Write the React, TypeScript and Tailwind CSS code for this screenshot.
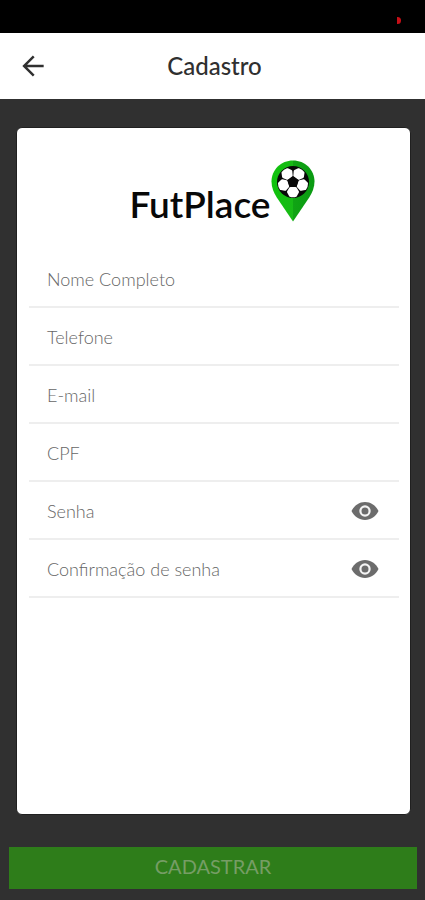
import { useState } from "react";

type Field = { id: string; label: string; type: string };

const fields: Field[] = [
  { id: "nome", label: "Nome Completo", type: "text" },
  { id: "telefone", label: "Telefone", type: "tel" },
  { id: "email", label: "E-mail", type: "email" },
  { id: "cpf", label: "CPF", type: "text" },
  { id: "senha", label: "Senha", type: "password" },
  { id: "confirmacao", label: "Confirmação de senha", type: "password" },
];

function BackArrow() {
  return (
    <svg viewBox="0 0 24 24" className="size-8" fill="#303030" aria-hidden="true">
      <path d="M20 11.100H7.600l5.600-5.700L11.900 4.100 4 12l7.900 7.900 1.300-1.300-5.600-5.700H20z" />
    </svg>
  );
}

function EyeIcon() {
  return (
    <svg viewBox="0 0 28 20" className="h-5 w-7" aria-hidden="true">
      <path d="M.5 10C3.200 4.500 8.100 1 14 1s10.800 3.500 13.500 9c-2.700 5.500-7.600 9-13.500 9S3.200 15.500.5 10z" fill="#6c6c6c" />
      <circle cx="14" cy="10" r="4.600" fill="#6c6c6c" stroke="#f4f4f4" strokeWidth="2.200" />
    </svg>
  );
}

const spokes = [0, 72, 144, 216, 288];

function PinLogo() {
  return (
    <svg viewBox="0 0 44 62" className="h-[62px] w-11" aria-hidden="true">
      <defs>
        <linearGradient id="pin" x1="0" x2="1" y1="0" y2="0">
          <stop offset="0" stopColor="#0fc30c" />
          <stop offset="0.500" stopColor="#18b916" />
          <stop offset="0.510" stopColor="#10a414" />
          <stop offset="1" stopColor="#0a9a12" />
        </linearGradient>
      </defs>
      <path d="M22 .5C10 .5.500 9.700.500 21.500c0 6 2.200 11 5.300 16L22 61.500l16.200-24c3.100-5 5.300-10 5.300-16C43.500 9.700 34 .5 22 .5z" fill="url(#pin)" />
      <circle cx="22" cy="22" r="16" fill="#080808" />
      {spokes.map((angle) => (
        <path
          key={angle}
          transform={`rotate(${angle} 22 22)`}
          d="M19.500 28.200h5l2.200 3.700-1.900 3.600q-2.800 1-5.600 0l-1.900-3.600z"
          fill="#fff"
          stroke="#fff"
          strokeWidth="2.600"
          strokeLinejoin="round"
        />
      ))}
      <path d="M22 16.200l5.500 4-2.100 6.500h-6.800l-2.100-6.500z" fill="#080808" />
    </svg>
  );
}

function FormField({ field }: { field: Field }) {
  const [visible, setVisible] = useState(false);
  const secret = field.type === "password";
  return (
    <div className="flex h-[58px] items-center border-b-2 border-[#eeeeee] pt-px pr-5 pl-[18px]">
      <div className="grid min-w-0 flex-1 items-center">
        <input
          id={field.id}
          type={secret && visible ? "text" : field.type}
          placeholder=" "
          className="peer col-start-1 row-start-1 h-8 w-full bg-transparent text-lg text-[#333] outline-none"
        />
        <label
          htmlFor={field.id}
          className="invisible col-start-1 row-start-1 cursor-text text-lg font-light text-[#666] peer-placeholder-shown:visible"
        >
          {field.label}
        </label>
      </div>
      {secret && (
        <button type="button" aria-label="Mostrar senha" onClick={() => setVisible(!visible)}>
          <EyeIcon />
        </button>
      )}
    </div>
  );
}

export default function App() {
  return (
    <div className="flex min-h-screen flex-col bg-[#303030] font-['Lato','Noto_Sans',sans-serif]">
      <div className="flex h-[33px] items-center justify-end bg-black pt-2 pr-6">
        <span className="h-[7px] w-1 rounded-r-full bg-[#c80f17]" />
      </div>
      <header className="grid h-[66px] grid-cols-[56px_1fr_52px] items-center bg-white">
        <button type="button" aria-label="Voltar" className="ml-[17px] flex size-8 items-center">
          <BackArrow />
        </button>
        <h1 className="text-center text-2xl leading-8 font-medium text-[#303030]">Cadastro</h1>
      </header>
      <form className="flex flex-1 flex-col" onSubmit={(event) => event.preventDefault()}>
        <main className="mt-7 mr-3.5 ml-4 flex-1 rounded-md border border-[#202020] bg-white pr-[11px] pl-3">
          <div className="flex h-[122px] items-start justify-center pt-8 pl-4">
            <span className="pt-6 text-[37px] leading-10 font-semibold text-[#080808]">FutPlace</span>
            <PinLogo />
          </div>
          {fields.map((field) => (
            <FormField key={field.id} field={field} />
          ))}
        </main>
        <button type="submit" className="mt-8 mr-2 mb-[11px] ml-[9px] h-[42px] bg-[#2e7d1a] pb-1 text-xl leading-6 text-[#769d65]">
          CADASTRAR
        </button>
      </form>
    </div>
  );
}
